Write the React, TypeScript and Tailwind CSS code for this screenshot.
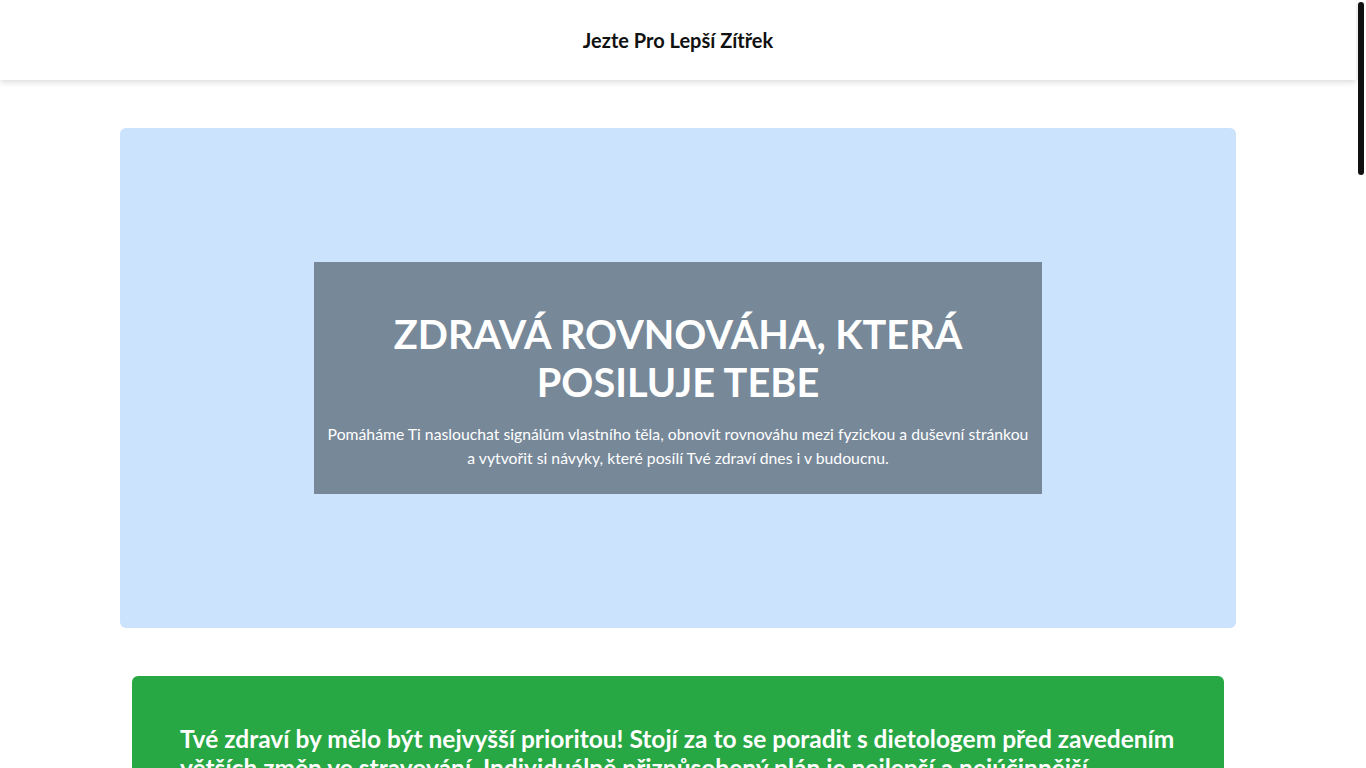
const tips = [
	{
		title: "Naslouchej svému tělu",
		text: "Hlad, únava i chuť na sladké jsou signály, které stojí za to vnímat. Nauč se je rozpoznat a reagovat na ně s klidem.",
	},
	{
		title: "Jez pestře a sezónně",
		text: "Zelenina, ovoce, luštěniny a celozrnné obiloviny dodají tělu vše potřebné. Čím barevnější talíř, tím lépe.",
	},
	{
		title: "Dopřej si pohyb",
		text: "Pravidelná procházka, jóga nebo jízda na kole podpoří nejen fyzickou kondici, ale i duševní pohodu.",
	},
	{
		title: "Spánek je základ",
		text: "Kvalitní spánek pomáhá regeneraci, hormonální rovnováze i lepšímu rozhodování o jídle během dne.",
	},
	{
		title: "Pij dostatek vody",
		text: "Voda je nejlepší volba. Měj láhev stále po ruce a pij průběžně, ne až ve chvíli, kdy máš žízeň.",
	},
	{
		title: "Buď k sobě laskavý",
		text: "Změna návyků chce čas. Oslav každý malý krok a neboj se začít znovu, když se něco nepovede.",
	},
];

export default function App() {
	return (
		<div
			className="bg-white text-[#111] pr-[10px]"
			style={{ fontFamily: "Lato, 'Noto Sans', sans-serif" }}
		>
			{/* Scroll indicator */}
			<div className="fixed top-[2px] right-[2px] w-[6px] h-[173px] rounded-full bg-[#111] z-20" />

			{/* Header */}
			<header className="h-20 flex items-center justify-center bg-white shadow-[0_2px_6px_rgba(0,0,0,0.15)] relative z-10">
				<h1 className="text-[20px] font-bold text-[#111]">Jezte Pro Lepší Zítřek</h1>
			</header>

			<main className="px-[120px] pt-12 pb-12">
				{/* Hero */}
				<section className="h-[500px] rounded-md bg-[#cce3fe] flex items-center justify-center">
					<div className="w-[728px] bg-[#778899] px-2 pt-12 pb-6 text-center text-white">
						<h2 className="text-[39.7px] leading-[48px] font-bold uppercase mb-4">
							Zdravá rovnováha, která posiluje tebe
						</h2>
						<p className="text-[15.75px] leading-6">
							Pomáháme Ti naslouchat signálům vlastního těla, obnovit rovnováhu mezi fyzickou a duševní stránkou a vytvořit si návyky, které posílí Tvé zdraví dnes i v budoucnu.
						</p>
					</div>
				</section>

				{/* Notice */}
				<section className="mx-3 mt-12 rounded-md bg-[#28a745] px-12 py-12 text-white">
					<p className="text-[24.5px] leading-[29px] font-bold">
						Tvé zdraví by mělo být nejvyšší prioritou! Stojí za to se poradit s dietologem před zavedením větších změn ve stravování. Individuálně přizpůsobený plán je nejlepší a nejúčinnější způsob, jak dosáhnout svých cílů.
					</p>
				</section>

				{/* Tips */}
				<section className="mt-12">
					<h2 className="text-center text-[32px] font-bold mb-8">Jak začít</h2>
					<div className="grid grid-cols-3 gap-6">
						{tips.map((tip) => (
							<div key={tip.title} className="rounded-md border border-gray-200 p-6 h-[260px] shadow-sm">
								<h3 className="text-[20px] font-bold mb-3">{tip.title}</h3>
								<p className="text-[16px] leading-6 text-gray-700">{tip.text}</p>
							</div>
						))}
					</div>
				</section>

				{/* About */}
				<section className="mt-12 rounded-md bg-[#f1f5f9] p-12 h-[520px]">
					<h2 className="text-[32px] font-bold mb-4">O nás</h2>
					<p className="text-[16px] leading-7 text-gray-700 max-w-[760px]">
						Jsme tým nutričních terapeutů a trenérů, kteří věří, že zdravé stravování nemusí být složité ani nudné. Pomáháme lidem najít cestu k jídlu, které chutná, sytí a dodává energii.
					</p>
				</section>

				{/* Contact */}
				<section className="mt-12 rounded-md bg-[#cce3fe] p-12 h-[420px] text-center">
					<h2 className="text-[32px] font-bold mb-4">Kontaktujte nás</h2>
					<p className="text-[16px] leading-6 text-gray-700">info@jezteprolepsizitrek.cz</p>
				</section>
			</main>

			<footer className="h-20 flex items-center justify-center bg-[#778899] text-white text-sm">
				© 2024 Jezte Pro Lepší Zítřek
			</footer>
		</div>
	);
}
